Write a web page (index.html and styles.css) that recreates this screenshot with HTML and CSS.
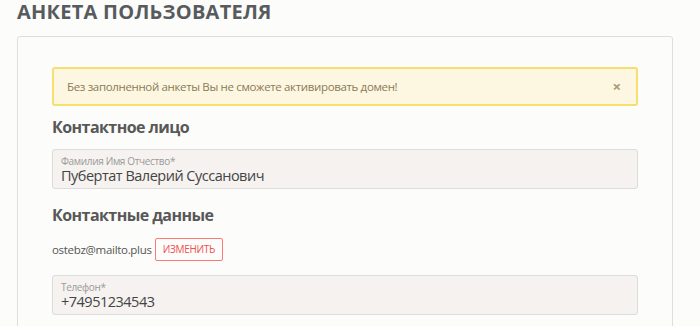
FILE: index.html
```html
<!DOCTYPE html>
<html lang="ru">
<head>
<meta charset="utf-8">
<link rel="stylesheet" href="styles.css">
</head>
<body>
<h1 class="page-title">АНКЕТА ПОЛЬЗОВАТЕЛЯ</h1>
<div class="card">
  <div class="alert">
    <span class="alert-text">Без заполненной анкеты Вы не сможете активировать домен!</span>
    <span class="alert-close">×</span>
  </div>
  <h2 class="section-title">Контактное лицо</h2>
  <div class="field">
    <div class="field-label">Фамилия Имя Отчество*</div>
    <div class="field-value">Пубертат Валерий Суссанович</div>
  </div>
  <h2 class="section-title second">Контактные данные</h2>
  <div class="email-row">
    <span class="email">ostebz@mailto.plus</span>
    <span class="btn-change">ИЗМЕНИТЬ</span>
  </div>
  <div class="field field-phone">
    <div class="field-label">Телефон*</div>
    <div class="field-value">+74951234543</div>
  </div>
</div>
</body>
</html>
```
FILE: styles.css
```css
html, body {
  margin: 0;
  padding: 0;
  background: #fcfcfb;
  font-family: "Open Sans", "Noto Sans", sans-serif;
  color: #555;
}
body {
  padding: 0 17px;
}
.page-title {
  margin: 0;
  padding-top: 0;
  font-size: 20px;
  line-height: 24px;
  font-weight: 700;
  color: #575b5e;
  letter-spacing: 0.25px;
}
.card {
  margin-top: 12px;
  width: 586px;
  border: 1px solid #dedede;
  border-radius: 3px;
  background: #fcfcfa;
  padding: 30px 34px 20px 34px;
}
.alert {
  display: flex;
  align-items: center;
  justify-content: space-between;
  height: 35px;
  border: 2px solid #f6de6f;
  border-radius: 3px;
  background: #fdf7e2;
  padding: 0 15px 0 13px;
}
.alert-text {
  font-size: 11.5px;
  letter-spacing: -0.35px;
  color: #8a7a55;
}
.alert-close {
  font-size: 15px;
  font-weight: 700;
  color: #a89a75;
  line-height: 1;
}
.section-title {
  margin: 10px 0 0 0;
  font-size: 16px;
  line-height: 22px;
  font-weight: 700;
  color: #585858;
  letter-spacing: -0.55px;
}
.section-title.second {
  margin-top: 15px;
}
.field {
  margin-top: 11px;
  height: 38px;
  border: 1px solid #dedcda;
  border-radius: 3px;
  background: #f5f2ef;
  padding: 0 8px;
}
.field-phone {
  margin-top: 14px;
}
.field-label {
  font-size: 10px;
  line-height: 13px;
  padding-top: 5px;
  letter-spacing: -0.35px;
  color: #9a9a9a;
}
.field-value {
  font-size: 14.5px;
  line-height: 16px;
  letter-spacing: -0.5px;
  color: #444;
}
.email-row {
  margin-top: 12px;
  display: flex;
  align-items: center;
  gap: 3px;
}
.email {
  font-size: 11.5px;
  letter-spacing: -0.3px;
  color: #555;
}
.btn-change {
  display: inline-block;
  border: 1px solid #f77;
  border-radius: 2px;
  padding: 0 7px;
  height: 21px;
  line-height: 21px;
  font-size: 10px;
  letter-spacing: -0.3px;
  color: #f05050;
}
```
